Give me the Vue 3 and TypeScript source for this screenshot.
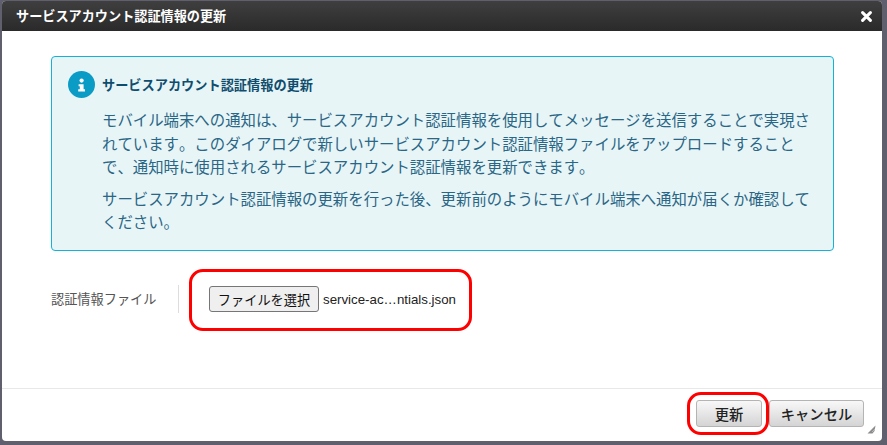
<script setup lang="ts">
const paragraphs: string[] = [
  'モバイル端末への通知は、サービスアカウント認証情報を使用してメッセージを送信することで実現されています。このダイアログで新しいサービスアカウント認証情報ファイルをアップロードすることで、通知時に使用されるサービスアカウント認証情報を更新できます。',
  'サービスアカウント認証情報の更新を行った後、更新前のようにモバイル端末へ通知が届くか確認してください。',
]
</script>

<template>
  <div class="page">
    <div class="dialog">
      <header class="head">
        <span class="head-title">サービスアカウント認証情報の更新</span>
        <svg class="close" width="11" height="11" viewBox="0 0 11 11" aria-label="閉じる">
          <path d="M1.6 1.6 L9.4 9.4 M9.4 1.6 L1.6 9.4" stroke="#fff" stroke-width="3" stroke-linecap="round" />
        </svg>
      </header>
      <main class="body">
        <section class="alert">
          <div class="alert-head">
            <svg class="info" width="27" height="27" viewBox="0 0 27 27">
              <circle cx="13.5" cy="13.5" r="13.5" fill="#0b9cc6" />
              <circle cx="13.6" cy="9.6" r="2.1" fill="#fff" />
              <path d="M10.6 13.2 H15.6 V18.2 H17 V20.4 H10.2 V18.2 H11.8 V15.2 H10.6 Z" fill="#fff" />
            </svg>
            <strong class="alert-title">サービスアカウント認証情報の更新</strong>
          </div>
          <p v-for="(text, i) in paragraphs" :key="i" class="alert-text">{{ text }}</p>
        </section>
        <div class="form-row">
          <label class="form-label">認証情報ファイル</label>
          <div class="form-field">
            <button class="file-btn" type="button">ファイルを選択</button>
            <span class="file-name">service-ac…ntials.json</span>
            <span class="mark mark-file"></span>
          </div>
        </div>
      </main>
      <footer class="foot">
        <div class="update-wrap">
          <button class="btn" type="button">更新</button>
          <span class="mark mark-update"></span>
        </div>
        <button class="btn btn-cancel" type="button">キャンセル</button>
        <svg class="grip" width="9" height="9" viewBox="0 0 9 9">
          <path d="M8.5 0.5 L7.5 6 L5.5 8.5 H0.5 Z" fill="#8c8c8c" />
          <path d="M8 4 L5 7" stroke="#c4c4c4" stroke-width="0.8" />
        </svg>
      </footer>
    </div>
  </div>
</template>

<style>
html, body { margin: 0; background: #5f5f6d; }
</style>

<style scoped>
.page {
  width: 887px;
  height: 445px;
  box-sizing: border-box;
  padding: 1px 5px 4px 2px;
  background: #5f5f6d;
  font-family: "Noto Sans CJK JP", "Liberation Sans", sans-serif;
  font-kerning: none;
  overflow: hidden;
}
.dialog {
  height: 100%;
  display: flex;
  flex-direction: column;
  background: #fff;
  border-radius: 4px;
  overflow: hidden;
}
.head {
  flex: none;
  height: 30px;
  display: flex;
  align-items: center;
  justify-content: space-between;
  padding: 0 10px 0 14px;
  background: linear-gradient(#3f3f3f, #2a2a2a);
}
.head-title {
  color: #fff;
  font-size: 13.15px;
  font-weight: 700;
  line-height: 30px;
}
.body {
  flex: 1;
  min-height: 0;
  padding: 25px 48px 0 49px;
}
.alert {
  box-sizing: border-box;
  height: 195px;
  padding: 14px 14px 0 16px;
  background: #e8f5f7;
  border: 1px solid #14b1d8;
  border-radius: 4px;
  color: #1a5a78;
}
.alert-head {
  display: flex;
  align-items: center;
  gap: 7px;
  height: 27px;
  margin-bottom: 10px;
}
.info { flex: none; }
.alert-title {
  color: #0f4d6e;
  font-size: 13.2px;
  font-weight: 700;
}
.alert-text {
  margin: 0 0 8px 34px;
  font-size: 15.4px;
  line-height: 23.6px;
  color: #2a6685;
}
.form-row {
  display: flex;
  align-items: center;
  height: 28px;
  margin-top: 34px;
}
.form-label {
  box-sizing: border-box;
  width: 128px;
  height: 28px;
  padding-bottom: 2px;
  display: flex;
  align-items: center;
  border-right: 1px solid #ddd;
  font-size: 13.2px;
  color: #555;
  flex: none;
}
.form-field {
  position: relative;
  display: flex;
  align-items: center;
  padding-left: 30px;
}
.file-btn {
  box-sizing: border-box;
  width: 110px;
  height: 26px;
  padding: 0;
  background: #efefef;
  border: 1px solid #767676;
  border-radius: 3px;
  color: #111;
  font: 13.2px "Noto Sans CJK JP", sans-serif;
  font-kerning: none;
}
.file-name {
  margin-left: 4px;
  font: 13.3px "Liberation Sans", sans-serif;
  color: #222;
  white-space: nowrap;
}
.mark {
  position: absolute;
  box-sizing: border-box;
  border: 3px solid #f00;
  border-radius: 14px;
  pointer-events: none;
}
.mark-file {
  left: 10px;
  top: -17px;
  width: 283px;
  height: 62px;
}
.foot {
  position: relative;
  flex: none;
  height: 53px;
  box-sizing: border-box;
  border-top: 1px solid #e8e8e8;
  display: flex;
  justify-content: flex-end;
  align-items: flex-start;
  gap: 7px;
  padding: 11px 18px 0 0;
}
.update-wrap { position: relative; display: flex; }
.btn {
  box-sizing: border-box;
  width: 66px;
  height: 27px;
  padding: 0;
  border: 1px solid #b4b4b4;
  border-radius: 3px;
  background: linear-gradient(#f8f8f8, #d4d4d4);
  color: #222;
  font: 500 14.3px "Noto Sans CJK JP", sans-serif;
  font-kerning: none;
}
.btn-cancel { width: 95px; }
.mark-update {
  left: -9px;
  top: -8px;
  width: 82px;
  height: 43px;
}
.grip {
  position: absolute;
  right: 6px;
  bottom: 7px;
}
</style>
